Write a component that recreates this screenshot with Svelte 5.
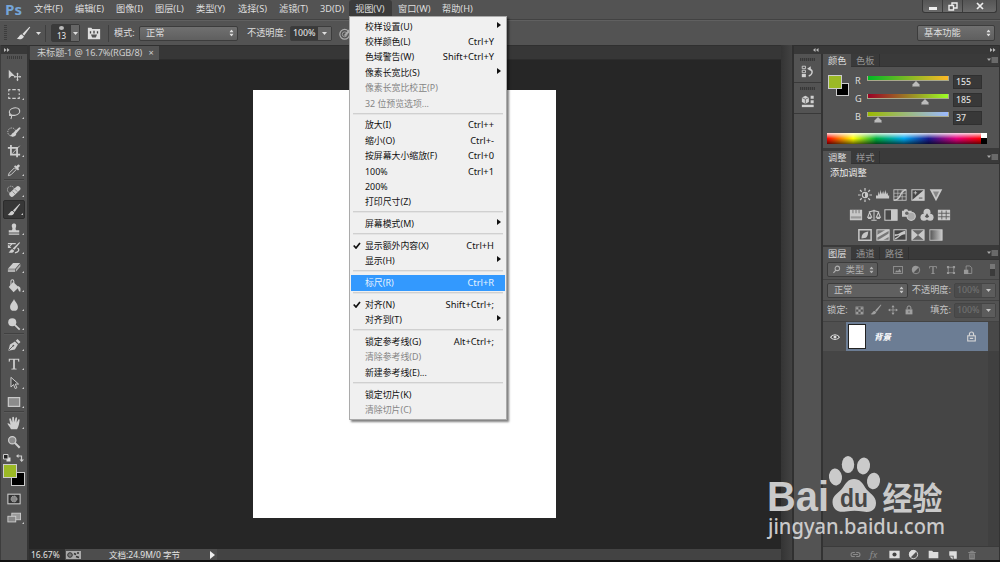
<script>
  const menus = [
    { name: '文件(F)', w: 41 }, { name: '编辑(E)', w: 41 }, { name: '图像(I)', w: 39 }, { name: '图层(L)', w: 41 },
    { name: '类型(Y)', w: 42 }, { name: '选择(S)', w: 41 }, { name: '滤镜(T)', w: 41 }, { name: '3D(D)', w: 35 },
    { name: '视图(V)', w: 43, open: true }, { name: '窗口(W)', w: 44 }, { name: '帮助(H)', w: 41 }
  ];

  const viewMenu = [
    [
      { name: '校样设置(U)', sub: true },
      { name: '校样颜色(L)', key: 'Ctrl+Y' },
      { name: '色域警告(W)', key: 'Shift+Ctrl+Y' },
      { name: '像素长宽比(S)', sub: true },
      { name: '像素长宽比校正(P)', off: true },
      { name: '32 位预览选项...', off: true }
    ],
    [
      { name: '放大(I)', key: 'Ctrl++' },
      { name: '缩小(O)', key: 'Ctrl+-' },
      { name: '按屏幕大小缩放(F)', key: 'Ctrl+0' },
      { name: '100%', key: 'Ctrl+1' },
      { name: '200%' },
      { name: '打印尺寸(Z)' }
    ],
    [{ name: '屏幕模式(M)', sub: true }],
    [
      { name: '显示额外内容(X)', key: 'Ctrl+H', check: true },
      { name: '显示(H)', sub: true }
    ],
    [{ name: '标尺(R)', key: 'Ctrl+R', active: true }],
    [
      { name: '对齐(N)', key: 'Shift+Ctrl+;', check: true },
      { name: '对齐到(T)', sub: true }
    ],
    [
      { name: '锁定参考线(G)', key: 'Alt+Ctrl+;' },
      { name: '清除参考线(D)', off: true },
      { name: '新建参考线(E)...' }
    ],
    [
      { name: '锁定切片(K)' },
      { name: '清除切片(C)', off: true }
    ]
  ];

  // all icons are drawn on a 16x16 grid
  const icons = {
    move: '<path d="M2 2v10l3-3h4z" fill="currentColor"/><path d="M12 6v8M8 10h8" stroke="currentColor" stroke-width="1.2"/><path d="M12 5l-1.5 2h3zM12 15l-1.5-2h3zM7.5 10l2-1.5v3zM16 10l-1.6-1.5v3z" fill="currentColor"/>',
    marquee: '<path d="M2 5V3h2M6 3h4M12 3h2v2M14 7v2M14 11v2h-2M10 13H6M4 13H2v-2M2 9V7" fill="none" stroke="currentColor" stroke-width="1.3"/>',
    lasso: '<ellipse cx="8.6" cy="6.4" rx="6" ry="4.2" transform="rotate(-12 8.6 6.4)" fill="none" stroke="currentColor" stroke-width="1.3"/><path d="M3.6 9.2c-1.4 1-.8 2 .6 1.6s1.2 2.2.2 4" fill="none" stroke="currentColor" stroke-width="1.2"/>',
    quick: '<circle cx="5.5" cy="8" r="4.6" fill="none" stroke="currentColor" stroke-dasharray="1.5 1.3"/><path d="M15.8 3.5L9.8 10.500 7.300 8.500 14 2.500z" fill="currentColor"/><path d="M8.6 8.8c-3-.6-3 2.400-5.1 3.600 2.5 1.700 6.500 1 7.100-1.800z" fill="currentColor"/>',
    crop: '<path d="M4.5 1v11H15M1 4.5h10.5V15" fill="none" stroke="currentColor" stroke-width="2"/><path d="M6 11L14.5 2" stroke="currentColor"/>',
    dropper: '<path d="M1.5 14.5l1-3 6-6 2 2-6 6z" fill="none" stroke="currentColor" stroke-width="1.1"/><path d="M8 4l4.5 4.5L14 7l-1.3-1.4 1.7-1.7c1-1-.9-2.9-2-1.9l-1.8 1.7L9.4 2.6z" fill="currentColor"/>',
    heal: '<circle cx="4.5" cy="6.5" r="4" fill="none" stroke="currentColor" stroke-dasharray="1.3 1.2"/><rect x="1.5" y="5.7" width="15" height="5.6" rx="2.6" transform="rotate(-43 9 8.5)" fill="currentColor"/><path d="M6.3 8.5L9 11.2M9 6l2.7 2.7" stroke="#777" stroke-width=".9"/>',
    brush: '<path d="M15.2 1.2L8.8 10.2 6.8 8.6 14.4.8z" fill="currentColor"/><path d="M6.4 9.2c-3-.2-2.6 2.8-5.6 4.2 2.8 1.4 6.9.8 7.6-2.6z" fill="currentColor"/>',
    stamp: '<path d="M6 6.6C3.2.2 12.8.2 10 6.6c-.5 1.2 0 2.4.5 2.9H14v2.5H2V9.500h3.500c.5-.5 1-1.700.5-2.900zM2 13.200h12v1.500H2z" fill="currentColor"/>',
    history: '<path d="M15 2L8.500 10l-2-1.400L14 1.500zM6.300 9.500c-2.500 0-2.500 2.500-4.500 3.500 2.500 1 5.700.5 6.400-2z" fill="currentColor"/><path d="M1 3h9M2 7l4-4M12 8c3 2 1 5-3 5.500" fill="none" stroke="currentColor" stroke-width="1.300"/><path d="M1 4v4h4z" fill="currentColor"/>',
    eraser: '<path d="M1 10l6-6.500h8L9.500 10z" fill="currentColor"/><path d="M1 10.700h8.300v3H1zM10.200 10.500L15.300 4.500v3l-5.100 6z" fill="currentColor" opacity=".75"/>',
    bucket: '<path d="M7 3.500l6.500 6L7.500 15 2 9z" fill="currentColor"/><path d="M4.500 8V2.800c0-2.500 3.300-2.500 3.300 0V8" fill="none" stroke="currentColor" stroke-width="1.200"/><path d="M12.500 8c3.400 1 3.300 4 2.700 6.500-2 .1-2-3-3.400-4.500z" fill="currentColor"/>',
    drop: '<path d="M8 1c1 3 4.500 5.500 4.500 9.200a4.500 4.500 0 0 1-9 0C3.500 6.500 7 4 8 1z" fill="currentColor"/>',
    dodge: '<circle cx="6" cy="6" r="4.600" fill="currentColor"/><path d="M9 9l5.500 5.500" stroke="currentColor" stroke-width="2"/>',
    pen: '<path d="M1.500 14.500L3.400 7.500 9 4l3.500 3.500L9 13z" fill="currentColor"/><path d="M10 3l2-1.800 3.400 3.400-2 2z" fill="currentColor"/><path d="M2 14l5-5" stroke="#535353"/><circle cx="7.300" cy="8.700" r="1" fill="#535353"/>',
    type: '<path d="M2 2h12v3.500h-1L12.500 3H9v10l2 .4v.8H5v-.8l2-.4V3H3.500L3 5.500H2z" fill="currentColor"/>',
    path: '<path d="M4.500 1.500v11l3-2.700 1.800 4.500 2-.8-1.900-4.300h3.800z" fill="#444" stroke="currentColor" stroke-width="1.100"/>',
    rect: '<rect x="1.500" y="3" width="13" height="10" fill="#8c8c8c" stroke="currentColor" stroke-width="1.300"/>',
    hand: '<path d="M4.500 15C3.500 12 1 10.300.5 8.500c1-1 2.500.5 3.500 1.500L2.500 3.500c.6-1.200 1.700-1 2.100.2L6 7.500 6 1.700c.4-1.100 1.700-1.100 2 0l.4 5.500L9.700 2c.5-1 1.700-.8 1.800.3L11 7.800l1.800-3.600c.7-.9 1.800-.4 1.600.7C14 8 13.500 12 11.500 15z" fill="currentColor"/>',
    zoom: '<circle cx="6" cy="6" r="4.200" fill="#8b8b8b" stroke="currentColor" stroke-width="1.300"/><path d="M9 9l5.500 5.500" stroke="currentColor" stroke-width="2.400"/>',
    mask: '<rect x="1" y="2.500" width="14" height="11" fill="#333" stroke="currentColor" stroke-width="1.200"/><circle cx="8" cy="8" r="3.400" fill="#888" stroke="#bbb" stroke-dasharray="1.200 1"/>',
    screens: '<rect x="5.500" y="2.500" width="10" height="7.500" fill="#999" stroke="currentColor"/><rect x="1" y="6" width="9" height="6.500" fill="#888" stroke="currentColor"/>',
    preset: '<path d="M1 2h4l1 1.500h9V15H1z" fill="currentColor"/><path d="M4 6v2.500M8 5.500v3M12 6v2.500" stroke="#444" stroke-width="1.500"/><path d="M4.500 9.800h7L10 13H6z" fill="#555"/>',
    pressure: '<circle cx="7" cy="9" r="6" fill="none" stroke="currentColor" stroke-width="1.500"/><circle cx="7" cy="9" r="3" fill="none" stroke="currentColor"/><path d="M6 10l8-9 2 2-8 8z" fill="currentColor"/>',
    historyPanel: '<path d="M1.500 1.500h4v3h-4zM1.500 6.500h4v3h-4z" fill="none" stroke="currentColor" stroke-width="1.100"/><path d="M1 11h5v4H1z" fill="currentColor"/><path d="M9.500 13.500c5-1.500 5.500-7 1.500-8.500" fill="none" stroke="currentColor" stroke-width="1.700"/><path d="M7.500 4.500L12 1.500v6z" fill="currentColor"/>',
    cubePanel: '<path d="M1 4l4-2 4 2v5l-4 2-4-2z" fill="currentColor"/><path d="M1 4l4 2 4-2M5 6v5" stroke="#666" fill="none"/><path d="M11 2h3.500v3.500H11zM11 7h3.500v3.500H11z" fill="currentColor"/><rect x="1" y="12.300" width="13.500" height="2.700" fill="currentColor"/>',
    sun: '<circle cx="8" cy="8" r="3" fill="none" stroke="currentColor" stroke-width="1.300"/><path d="M8 5a3 3 0 0 1 0 6z" fill="currentColor"/><path d="M8 0v3M8 13v3M0 8h3M13 8h3M2.300 2.300l2 2M11.700 11.700l2 2M2.300 13.700l2-2M11.700 4.300l2-2" stroke="currentColor" stroke-width="1.400"/>',
    levels: '<path d="M0 9l1-1 1 1 1-5 1 4 1-6 1 5 1-3 1 3 1-4 1 4 1-5 1 5 1-2 1 4 1-1v4H0z" fill="currentColor"/>',
    curves: '<rect x="1" y="2" width="14" height="12" fill="none" stroke="currentColor"/><path d="M5.500 2v12M10.500 2v12M1 6h14M1 10h14" stroke="currentColor" stroke-width=".7"/><path d="M1 14c9 0 6-11 14-12" fill="none" stroke="currentColor" stroke-width="1.700"/>',
    exposure: '<rect x="1" y="2" width="14" height="12" fill="#444" stroke="currentColor" stroke-width="1.200"/><path d="M15 2v12H1z" fill="currentColor"/><path d="M3 5.500h4M5 3.500v4" stroke="currentColor"/><path d="M9 11.500h4" stroke="#444"/>',
    vibrance: '<path d="M.8 1.500h14.400L8 15z" fill="currentColor"/><path d="M4.500 4h7L8 11z" fill="#888"/>',
    hue: '<path d="M1 2h14v12H1z" fill="currentColor"/><path d="M4.500 2v4M8 2v4M11.500 2v4" stroke="#777" stroke-width="1.100"/><path d="M2 9.500h12v2.500H2z" fill="#999"/>',
    balance: '<path d="M8 2v11M5 14h6M2 4.500l6-1.500 6 1.500M3 5L.8 10.500h4.500zM13 5l-2.300 5.500h4.500z" fill="none" stroke="currentColor" stroke-width="1.200"/><path d="M.5 10.500h5l-1 2h-3zM10.500 10.500h5l-1 2h-3z" fill="currentColor"/>',
    bw: '<rect x="1" y="2" width="14" height="12" fill="#484848" stroke="currentColor" stroke-width="1.200"/><path d="M8 2h7v12H8z" fill="currentColor"/>',
    photo: '<path d="M0 3h2l1-1.500h3L7 3h4v7H0z" fill="currentColor"/><circle cx="10.500" cy="9.500" r="4.700" fill="#aaa" stroke="currentColor" stroke-width="1.300"/><circle cx="5.500" cy="6" r="2" fill="#666"/>',
    mixer: '<circle cx="8" cy="4.800" r="4" fill="currentColor"/><circle cx="4.500" cy="10.500" r="4" fill="currentColor"/><circle cx="11.500" cy="10.500" r="4" fill="currentColor"/><path d="M8 6l2.500 4L8 11.500 5.500 10z" fill="#555"/>',
    lookup: '<path d="M1 2h14v12H1z" fill="currentColor"/><path d="M5.500 3v10M10.500 3v10M1.500 6h13M1.500 10h13" stroke="#5a5a5a"/>',
    invert: '<rect x="1" y="2" width="14" height="12" fill="#555" stroke="currentColor" stroke-width="1.700"/><path d="M4 12c0-5 3-7.500 8-8-1 1.500 0 5-3 7z" fill="currentColor"/>',
    poster: '<rect x="1" y="2" width="14" height="12" fill="#777" stroke="currentColor" stroke-width="1.200"/><path d="M1 8l10-6h4v1L1 11z" fill="currentColor"/><path d="M2 14l13-8v4l-7 4z" fill="currentColor"/>',
    threshold: '<rect x="1" y="2" width="14" height="12" fill="#444" stroke="currentColor" stroke-width="1.200"/><path d="M2 7c4 1 5-2 12-4v4c-6 0-7 5-12 6 0-3 4-2 5-5L2 9.500z" fill="currentColor"/>',
    selective: '<rect x="1" y="2" width="14" height="12" fill="#666" stroke="currentColor"/><path d="M1 2l7 6-7 6zM15 2L8 8l7 6z" fill="currentColor"/>',
    gradmap: '<defs><linearGradient id="gm"><stop offset="0" stop-color="#555"/><stop offset="1" stop-color="#ccc"/></linearGradient></defs><rect x="1" y="2" width="14" height="12" fill="url(#gm)" stroke="currentColor"/>',
    search: '<circle cx="9.500" cy="6" r="4" fill="none" stroke="currentColor" stroke-width="1.800"/><path d="M7 9l-4.500 5" stroke="currentColor" stroke-width="2"/>',
    image: '<rect x="1" y="2.500" width="14" height="11" fill="none" stroke="currentColor" stroke-width="1.300"/><path d="M3 11.500l3-3 2 1.500 2.500-4 3 5.500z" fill="currentColor"/>',
    half: '<circle cx="8" cy="8" r="6" fill="none" stroke="currentColor" stroke-width="1.300"/><path d="M12.200 3.800A6 6 0 1 0 3.800 12.200z" fill="currentColor"/>',
    shape: '<rect x="3.500" y="3.500" width="9" height="9" fill="none" stroke="currentColor" stroke-width="1.200"/><path d="M1.500 1.500h3.500v3.500H1.500zM11 1.500h3.500v3.500H11zM1.500 11h3.500v3.500H1.500zM11 11h3.500v3.500H11z" fill="currentColor"/>',
    smart: '<path d="M5 1.500h6l3 3v9H5z" fill="none" stroke="currentColor" stroke-width="1.300"/><path d="M1.500 7.500h7v7h-7z" fill="currentColor"/>',
    checker: '<rect x="1.500" y="1.500" width="13" height="13" fill="none" stroke="currentColor"/><path d="M2 2h4v4H2zM10 2h4v4h-4zM6 6h4v4H6zM2 10h4v4H2zM10 10h4v4h-4z" fill="currentColor"/>',
    cross: '<path d="M8 2v12M2 8h12" stroke="currentColor" stroke-width="1.200"/><path d="M8 0L5.500 3.500h5zM8 16l-2.500-3.500h5zM0 8l3.500-2.500v5zM16 8l-3.500-2.500v5z" fill="currentColor"/>',
    lock: '<rect x="2.500" y="7" width="11" height="8" fill="currentColor"/><path d="M5 7V4.500a3 3 0 0 1 6 0V7" fill="none" stroke="currentColor" stroke-width="1.600"/><path d="M8 9.500v3" stroke="#555" stroke-width="1.300"/>',
    lockOutline: '<rect x="2.500" y="7" width="11" height="7.500" fill="none" stroke="currentColor" stroke-width="1.600"/><path d="M5 7V4.500a3 3 0 0 1 6 0V7M5.500 10.800h5" fill="none" stroke="currentColor" stroke-width="1.700"/>',
    eye: '<path d="M1 8.500c3-5.500 11-5.500 14 0-3 4.500-11 4.500-14 0z" fill="#3c3c3c" stroke="currentColor" stroke-width="1.700"/><circle cx="8" cy="8" r="2.500" fill="currentColor"/>',
    link: '<path d="M7 5H4.500a3 3 0 0 0 0 6H7M9 5h2.500a3 3 0 0 1 0 6H9M4.500 8h7" fill="none" stroke="currentColor" stroke-width="1.500"/>',
    addMask: '<path d="M.5 2.500h15v11H.5z" fill="currentColor"/><circle cx="8" cy="8" r="3" fill="#444"/>',
    folder: '<path d="M1 2.500h5l1.500 2H15v9H1z" fill="currentColor"/>',
    page: '<path d="M2 2h12v12H9V9H2z" fill="currentColor"/><path d="M2.500 10.500h5V15z" fill="currentColor"/>',
    trash: '<path d="M2 4h12M6 3.500V2h4v1.500" stroke="currentColor" stroke-width="1.500" fill="none"/><path d="M3.500 5.500h9V15h-9z" fill="currentColor"/><path d="M6 7v6M8 7v6M10 7v6" stroke="#555" stroke-width=".9"/>'
  };

  const tools = [
    ['move', 'marquee', 'lasso', 'quick', 'crop', 'dropper'],
    ['heal', 'brush', 'stamp', 'history', 'eraser', 'bucket', 'drop', 'dodge'],
    ['pen', 'type', 'path', 'rect'],
    ['hand', 'zoom']
  ];

  const channels = [
    { name: 'R', value: 155, from: '#00b925', to: '#ffb925' },
    { name: 'G', value: 185, from: '#9b0025', to: '#9bff25' },
    { name: 'B', value: 37, from: '#9bb900', to: '#9bb9ff' }
  ];

  const adjustments = [
    ['sun', 'levels', 'curves', 'exposure', 'vibrance'],
    ['hue', 'balance', 'bw', 'photo', 'mixer', 'lookup'],
    ['invert', 'poster', 'threshold', 'selective', 'gradmap']
  ];
</script>

{#snippet icon(name, size = 12)}
  <svg class="icon" width={size} height={size} viewBox="0 0 16 16">{@html icons[name]}</svg>
{/snippet}

{#snippet updown()}
  <svg class="updown" width="5" height="8" viewBox="0 0 5 8"><path d="M0 3l2.500-3L5 3zM0 5l2.500 3L5 5z" fill="currentColor" /></svg>
{/snippet}

{#snippet caret()}
  <svg class="caret" width="5" height="3" viewBox="0 0 5 3"><path d="M0 0h5L2.500 3z" fill="currentColor" /></svg>
{/snippet}

{#snippet tabs(names)}
  <div class="tabs">
    {#each names as name, i}
      <span class="tab" class:on={i === 0}>{name}</span>
    {/each}
    <svg class="flyout" width="11" height="7" viewBox="0 0 11 7"><path d="M0 1.500h4L2 4z" fill="#aaa" /><path d="M4.500 1H11M4.500 3H11M4.500 5H11" stroke="#999" /></svg>
  </div>
{/snippet}

<div class="app">
  <div class="menubar">
    <span class="logo">Ps</span>
    <nav>
      {#each menus as m}
        <span class="menu" class:open={m.open} style="width: {m.w}px">{m.name}</span>
      {/each}
    </nav>
    <div class="window-buttons">
      <span class="min"><i></i></span>
      <span><svg width="10" height="9" viewBox="0 0 10 9"><path d="M4 1h5v5H4z" fill="none" stroke="#eee" stroke-width="1.400" /><path d="M1 3.500h4.500V8H1z" fill="#5a5a5a" stroke="#eee" stroke-width="1.400" /></svg></span>
      <span class="close"><svg width="8" height="8" viewBox="0 0 8 8"><path d="M1 1l6 6M7 1L1 7" stroke="#eee" stroke-width="1.700" /></svg></span>
    </div>
  </div>

  <div class="options">
    <i class="grip"></i>
    <span class="brush">{@render icon('brush', 15)}</span>
    {@render caret()}
    <i class="rule"></i>
    <div class="size"><div class="tip"><i></i><b>13</b></div><div class="drop">{@render caret()}</div></div>
    <span class="preset">{@render icon('preset', 14)}</span>
    <i class="rule"></i>
    <span class="mode-label">模式:</span>
    <div class="select mode"><span>正常</span>{@render updown()}</div>
    <span class="op-label">不透明度:</span>
    <div class="field"><b>100%</b><div class="drop">{@render caret()}</div></div>
    <span class="pressure">{@render icon('pressure', 13)}</span>
    <div class="select workspace"><span>基本功能</span>{@render updown()}</div>
  </div>

  <div class="body">
    <aside class="toolbox">
      <div class="strip"><svg width="6" height="4" viewBox="0 0 6 4"><path d="M0 0l2.500 2L0 4zM3 0l2.500 2L3 4z" fill="#bbb" /></svg></div>
      <div class="handle"></div>
      {#each tools as group, g}
        {#if g}<hr />{/if}
        {#each group as t}
          <div class="tool" class:on={t === 'brush'}>
            {@render icon(t, 14)}
            {#if t !== 'move' && t !== 'zoom'}<i></i>{/if}
          </div>
        {/each}
      {/each}
      <div class="mini">
        <svg width="8" height="8" viewBox="0 0 8 8"><path d="M3.500 3.500h4v4h-4z" fill="#ddd" /><path d="M.5.5h4.500v4.500H.5z" fill="#222" stroke="#ccc" /></svg>
        <svg width="8" height="8" viewBox="0 0 8 8"><path d="M2 2h3.500v4" fill="none" stroke="#ccc" stroke-width="1.200" /><path d="M0 2l2.500-2v4zM3.500 5.500h4.500L5.700 8z" fill="#ccc" /></svg>
      </div>
      <div class="swatches"><i class="bg"></i><i class="fg"></i></div>
      <div class="tool">{@render icon('mask', 14)}</div>
      <div class="tool">{@render icon('screens', 14)}<i></i></div>
    </aside>

    <main>
      <div class="doc-tabs"><span class="doc-tab">未标题-1 @ 16.7%(RGB/8) <em>×</em></span></div>
      <div class="stage"><div class="paper"></div></div>
      <div class="status">
        <span class="zoom">16.67%</span>
        <div class="info">
          <svg width="15" height="8" viewBox="0 0 15 8"><path d="M0 0h15v8H0z" fill="#aaa" /><circle cx="4" cy="4" r="2.300" fill="#777" stroke="#333" /><path d="M8 2.500l2 1M10 5.500l3 1M11 2h2" stroke="#333" stroke-width="1.600" fill="none" /></svg>
          <span>文档:24.9M/0 字节</span>
          <svg width="5" height="8" viewBox="0 0 5 8"><path d="M0 0l5 4-5 4z" fill="#eee" /></svg>
        </div>
      </div>
    </main>
    <div class="vscroll"></div>

    <div class="right">
      <div class="strip both">
        <svg width="6" height="4" viewBox="0 0 6 4"><path d="M2.500 0L0 2l2.500 2zM5.500 0L3 2l2.500 2z" fill="#bbb" /></svg>
        <svg width="6" height="4" viewBox="0 0 6 4"><path d="M0 0l2.500 2L0 4zM3 0l2.500 2L3 4z" fill="#bbb" /></svg>
      </div>
      <div class="columns">
        <div class="dock">
          <div class="dock-cell"><i></i>{@render icon('historyPanel', 13)}</div>
          <div class="dock-cell"><i></i>{@render icon('cubePanel', 14)}</div>
        </div>
        <div class="panels">
          <section class="color">
            {@render tabs(['颜色', '色板'])}
            <div class="mixer">
              <div class="pair"><i class="bg"></i><i class="fg"></i></div>
              <div class="channels">
                {#each channels as c}
                  <div class="channel">
                    <span>{c.name}</span>
                    <div class="track">
                      <div class="ramp" style="background: linear-gradient(to right, {c.from}, {c.to})"></div>
                      <svg class="thumb" style="left: {c.value / 255 * 100}%" width="8" height="6" viewBox="0 0 8 6"><path d="M4 0l3.500 3.500v2h-7v-2z" fill="#bbb" stroke="#888" stroke-width=".6" /></svg>
                    </div>
                    <b>{c.value}</b>
                  </div>
                {/each}
              </div>
            </div>
            <div class="spectrum"><div></div><i></i></div>
          </section>

          <section class="adjust">
            {@render tabs(['调整', '样式'])}
            <p>添加调整</p>
            {#each adjustments as row}
              <div class="adjust-row">
                {#each row as a}<span>{@render icon(a, 14)}</span>{/each}
              </div>
            {/each}
          </section>

          <section class="layers">
            {@render tabs(['图层', '通道', '路径'])}
            <div class="bar filter">
              <div class="select kind">{@render icon('search', 9)}<span>类型</span>{@render updown()}</div>
              <div class="filters">
                {#each ['image', 'half', 'type', 'shape', 'smart'] as f}{@render icon(f, 10)}{/each}
              </div>
              <i class="switch"></i>
            </div>
            <div class="bar">
              <div class="select blend"><span>正常</span>{@render updown()}</div>
              <span class="lab">不透明度:</span>
              <div class="field dim"><b>100%</b><div class="drop">{@render caret()}</div></div>
            </div>
            <div class="bar locks">
              <span class="lock-label">锁定:</span>
              <div class="lock-icons">
                {@render icon('checker', 9)}{@render icon('brush', 12)}{@render icon('cross', 10)}{@render icon('lock', 10)}
              </div>
              <span class="lab">填充:</span>
              <div class="field dim"><b>100%</b><div class="drop">{@render caret()}</div></div>
            </div>
            <div class="layer">
              <div class="eye">{@render icon('eye', 10)}</div>
              <div class="layer-row"><i class="thumbnail"></i><span>背景</span>{@render icon('lockOutline', 11)}</div>
            </div>
            <div class="empty"></div>
            <div class="footer">
              <span class="dim">{@render icon('link', 11)}</span>
              <em>fx</em>
              {@render icon('addMask', 11)}
              {@render icon('half', 11)}
              {@render icon('folder', 11)}
              {@render icon('page', 10)}
              <span class="dim">{@render icon('trash', 10)}</span>
            </div>
          </section>
        </div>
      </div>
    </div>
  </div>
  <div class="taskbar"></div>

  <div class="dropdown">
    {#each viewMenu as group, g}
      {#if g}<hr />{/if}
      {#each group as item}
        <div class="item" class:off={item.off} class:active={item.active}>
          <span class="check">{#if item.check}<svg width="8" height="7" viewBox="0 0 8 7"><path d="M.7 3.500L3 6l4-5" fill="none" stroke="#111" stroke-width="1.700" /></svg>{/if}</span>
          <span class="name">{item.name}</span>
          {#if item.key}<span class="key">{item.key}</span>{/if}
          {#if item.sub}<svg class="sub" width="4" height="6" viewBox="0 0 4 6"><path d="M0 0l4 3-4 3z" fill="#111" /></svg>{/if}
        </div>
      {/each}
    {/each}
  </div>

  <svg class="watermark" width="190" height="100" viewBox="0 0 190 100">
    <g fill="#d2d2d2">
      <text x="3" y="57" class="bai" textLength="62" lengthAdjust="spacingAndGlyphs">Bai</text>
      <ellipse cx="71.500" cy="23" rx="6.500" ry="8.500" transform="rotate(-8 71.500 23)" />
      <ellipse cx="84" cy="10.500" rx="6.200" ry="8.600" />
      <ellipse cx="99.500" cy="12" rx="6.500" ry="8.500" transform="rotate(10 99.500 12)" />
      <ellipse cx="109.500" cy="27" rx="6.500" ry="8.300" transform="rotate(8 109.500 27)" />
      <path d="M90 25c6 0 8.500 4 11.500 9 3 4.500 10.500 8 10.500 15 0 8-7 10-13 8.500-6-1-11-1-17 0C75 59 68.500 56 68.500 48c0-7 6.500-9 10-14s5.500-9 11.500-9z" />
      <text x="118.500" y="56" class="cn" textLength="60" lengthAdjust="spacingAndGlyphs">经验</text>
      <text x="4" y="80" class="url" textLength="177" lengthAdjust="spacingAndGlyphs">jingyan.baidu.com</text>
    </g>
    <text x="76" y="53" class="du" fill="#484848" textLength="28" lengthAdjust="spacingAndGlyphs">du</text>
  </svg>
</div>

<style>
  :global(body) { margin: 0; background: #000; overflow: hidden; }
  .app { position: relative; width: 1000px; height: 562px; display: flex; flex-direction: column; background: #535353; color: #dedede; font: 9.2px/12px "Noto Sans", "Noto Sans CJK SC", sans-serif; overflow: hidden; }
  .app * { box-sizing: border-box; }
  svg { display: block; flex: none; }
  i { display: block; }
  b { font-weight: 500; }
  hr { margin: 0; border: 0; }

  .menubar { display: flex; height: 20px; flex: none; background: #535353; border-bottom: 1px solid #424242; white-space: nowrap; }
  .logo { width: 28px; padding-left: 5px; font: bold 15px/18px "Open Sans", sans-serif; color: #75a5d8; }
  nav { display: flex; height: 17px; }
  .menu { padding-left: 6px; line-height: 18px; }
  .menu.open { background: #3b3b3b; border-radius: 3px 3px 0 0; }
  .window-buttons { display: flex; margin-left: auto; margin-right: 3px; height: 13px; border: 1px solid #383838; border-top: 0; border-radius: 0 0 3px 3px; background: linear-gradient(#555, #6a6a6a); }
  .window-buttons span { width: 20px; display: flex; align-items: center; justify-content: center; border-right: 1px solid #3c3c3c; }
  .window-buttons .close { width: 33px; border: 0; }
  .min i { width: 8px; height: 3px; background: #eee; margin-top: 5px; }

  .options { display: flex; align-items: center; height: 25px; flex: none; border-top: 1px solid #606060; white-space: nowrap; }
  .grip { width: 3px; height: 16px; margin-left: 4px; background: repeating-linear-gradient(#3d3d3d 0 1px, #535353 1px 2px); }
  .brush { margin: 0 5px 0 9px; }
  .rule { width: 1px; height: 17px; background: #3f3f3f; margin-left: 4px; }
  .size { display: flex; height: 18px; margin-left: 5px; border: 1px solid #3a3a3a; border-radius: 2px; }
  .tip { width: 19px; background: #3a3a3a; display: flex; flex-direction: column; align-items: center; }
  .tip i { width: 5px; height: 5px; border-radius: 50%; background: #bbb; margin-top: 1px; }
  .tip b { font-size: 8px; line-height: 11px; }
  .drop { width: 8px; display: flex; align-items: center; justify-content: center; background: #666; }
  .preset { margin: 0 3px 0 7px; }
  .mode-label { margin-left: 5px; width: 25px; }
  .select { display: flex; align-items: center; justify-content: space-between; padding: 0 3px 0 6px; border: 1px solid #3c3c3c; border-radius: 2px; background: linear-gradient(#707070, #5f5f5f); }
  .select .updown { transform: scale(.85); }
  .mode { width: 99px; height: 15px; }
  .op-label { margin-left: 9px; width: 43px; }
  .field { display: flex; height: 15px; border: 1px solid #3c3c3c; background: #3a3a3a; border-radius: 2px; line-height: 13px; }
  .field b { width: 27px; padding-left: 2px; font-size: 8.800px; }
  .field .drop { width: 13px; }
  .pressure { margin-left: 7px; color: #ababab; }
  .workspace { width: 78px; height: 16px; margin-left: auto; margin-right: 5px; }

  .body { display: flex; height: 515px; flex: none; }
  .strip { height: 9px; flex: none; background: #383838; padding: 2px 0 0 3px; border-top: 1px solid #2f2f2f; }
  .toolbox { width: 29px; background: #535353; border-right: 2px solid #353535; border-left: 1px solid #3d3d3d; color: #cfcfcf; }
  .handle { height: 3px; width: 15px; margin: 2px 0 6px 6px; background: repeating-linear-gradient(to right, #3a3a3a 0 1px, #535353 1px 2px); }
  .tool { position: relative; display: flex; align-items: center; justify-content: center; height: 19px; margin: 0 2px; padding-right: 1px; }
  .tool.on { background: #373737; border: 1px solid #2c2c2c; border-radius: 2px; }
  .tool i { position: absolute; right: 1px; bottom: 3px; border: 1px solid transparent; border-right-color: #ccc; border-bottom-color: #ccc; }
  .toolbox hr { height: 2px; margin: 0 3px; background: #414141; border-bottom: 1px solid #5a5a5a; }
  .mini { display: flex; gap: 5px; margin: 1px 0 0 2px; height: 11px; align-items: center; }
  .swatches { position: relative; height: 23px; margin: 1px 0 2px 2px; }
  .swatches i { position: absolute; width: 14px; height: 14px; border: 1px solid #ccc; }
  .fg { left: 0; top: 0; background: #9bb925; }
  .bg { left: 8px; top: 8px; background: #000; }

  main { width: 752px; display: flex; flex-direction: column; }
  .doc-tabs { height: 15px; flex: none; background: #373737; border-bottom: 1px solid #2d2d2d; display: flex; border-top: 1px solid #303030; }
  .doc-tab { width: 129px; height: 14px; padding-left: 7px; background: #535353; line-height: 14px; color: #cecece; margin-left: 1px; white-space: nowrap; letter-spacing: -.1px; }
  .doc-tab em { font-style: normal; margin-left: 4px; }
  .stage { flex: 1; background: #262626; padding: 30px 0 0 224px; }
  .paper { width: 303px; height: 428px; background: #fff; }
  .status { height: 11px; flex: none; display: flex; background: #434343; font-size: 8.500px; line-height: 12px; color: #e4e4e4; }
  .zoom { width: 36px; padding-left: 2px; background: #303030; }
  .info { display: flex; align-items: center; width: 152px; padding: 1px 2px 0 1px; background: #4d4d4d; }
  .info span { margin: 0 auto 0 28px; }
  .vscroll { width: 13px; background: linear-gradient(to right, #343434, #424242); border-right: 2px solid #303030; }

  .right { flex: 1; display: flex; flex-direction: column; border-right: 1px solid #333; }
  .both { display: flex; justify-content: space-between; padding: 2px 3px 0 19px; }
  .columns { display: flex; flex: 1; }
  .dock { width: 29px; display: flex; flex-direction: column; border-right: 2px solid #333; }
  .dock-cell { height: 29px; display: flex; flex-direction: column; align-items: center; gap: 4px; padding-top: 4px; border-bottom: 1px solid #393939; color: #d0d0d0; }
  .dock-cell:nth-child(2) { height: 31px; }
  .dock-cell i { width: 15px; height: 3px; background: repeating-linear-gradient(to right, #383838 0 1px, #4a4a4a 1px 2px); }
  .panels { flex: 1; display: flex; flex-direction: column; background: #3a3a3a; }
  section { display: flex; flex-direction: column; background: #535353; }
  .tabs { display: flex; align-items: center; height: 13px; flex: none; background: #3a3a3a; border-bottom: 1px solid #333; }
  .tab { width: 29px; height: 13px; padding-left: 5px; line-height: 13px; color: #969696; border-right: 1px solid #303030; white-space: nowrap; }
  .tab.on { background: #535353; color: #ddd; width: 28px; border: 0; }
  .flyout { margin-left: auto; margin-right: 1px; }

  .color { height: 94px; }
  .mixer { display: flex; height: 66px; }
  .pair { position: relative; width: 27px; margin: 8px 0 0 5px; }
  .pair i { position: absolute; width: 14px; height: 14px; border: 1px solid #ccc; }
  .pair .bg { left: 8px; top: 8px; width: 13px; height: 13px; }
  .channels { padding-top: 5px; }
  .channel { display: flex; height: 18px; }
  .channel span { width: 12px; line-height: 18px; }
  .track { position: relative; width: 82px; margin-top: 4px; }
  .ramp { height: 5px; border: 1px solid #a9a98c; border-width: 0 1px 1px; }
  .thumb { position: absolute; top: 5px; margin-left: -5px; }
  .channel b { width: 29px; height: 14px; margin: 3px 0 0 4px; padding-left: 2px; background: #383838; border: 1px solid #303030; line-height: 12px; font-size: 8.800px; }
  .spectrum { display: flex; width: 160px; height: 11px; margin-left: 4px; }
  .spectrum div { flex: 1; background: linear-gradient(rgba(255, 255, 255, .85), transparent 50%, rgba(0, 0, 0, .6)), linear-gradient(to right, #f00, #ff0 17%, #00b140 32%, #00a8f0 50%, #1a1a90 66%, #e6007e 84%, #f00); }
  .spectrum i { width: 6px; background: linear-gradient(#fff 50%, #000 50%); }

  .adjust { height: 94px; margin-top: 3px; }
  .adjust p { margin: 3px 0 6px 7px; line-height: 12px; height: 12px; color: #e8e8e8; }
  .adjust-row { display: flex; height: 20px; flex: none; align-items: center; padding-left: 33px; color: #c8c8c8; }
  .adjust-row:nth-of-type(3) { padding-left: 24px; }
  .adjust-row span { width: 17.700px; display: flex; justify-content: center; }

  .layers { flex: 1; margin-top: 2px; }
  .bar { display: flex; align-items: center; height: 21px; flex: none; border-bottom: 1px solid #434343; padding: 0 4px; color: #c4c4c4; white-space: nowrap; }
  .filter { height: 20px; }
  .locks { padding-bottom: 2px; }
  .kind { width: 51px; height: 15px; padding-left: 4px; background: #5d5d5d; color: #b0b0b0; }
  .filters { display: flex; gap: 7.500px; margin-left: 15px; color: #999; }
  .switch { width: 5px; height: 12px; margin-left: auto; background: linear-gradient(#777 45%, #3b3b3b 45%); }
  .blend { width: 81px; height: 15px; background: #606060; }
  .lab { margin-left: auto; margin-right: 3px; }
  .dim b { color: #707070; }
  .bar .field { border-color: #454545; background: #4b4b4b; margin-right: -1px; }
  .bar .field .drop { background: #5c5c5c; }
  .lock-icons { display: flex; align-items: center; gap: 6.200px; margin-left: 7px; color: #a0a0a0; }
  .layer { display: flex; height: 29px; background: #484848; }
  .eye { width: 23px; display: flex; align-items: center; justify-content: center; background: #505050; }
  .layer-row { width: 142px; display: flex; align-items: center; padding-left: 2px; background: #6c7d94; color: #fff; }
  .thumbnail { width: 18px; height: 25px; background: #fff; border: 1px solid #222; }
  .layer-row span { margin: 0 auto 0 8px; font-style: italic; font-size: 8.500px; font-weight: bold; }
  .layer-row .icon { margin-right: 11px; color: #d6d6d6; }
  .empty { flex: 1; background: #454545; border-right: 11px solid #404040; }
  .footer { display: flex; align-items: center; gap: 8.800px; height: 14px; padding: 2px 0 0 27px; background: #525252; border-top: 1px solid #3b3b3b; }
  .footer em { width: 10px; color: #8b8b8b; }
  .footer .dim { color: #8b8b8b; }
  .taskbar { height: 2px; background: #101010; }

  /* the opened 视图 menu floats over the document */
  .dropdown { position: absolute; left: 349px; top: 16px; width: 158px; height: 404px; padding: 2px 1px; background: #f0f0f0; border: 1px solid #aaa; box-shadow: 2px 2px 2px rgba(0, 0, 0, .5); color: #111; font-size: 8.900px; white-space: nowrap; }
  .dropdown hr { height: 2px; margin: 1.400px 2px 3px; background: #d0d0d0; border-bottom: 1px solid #e4e4e4; }
  .item { display: flex; align-items: center; height: 15.400px; padding-right: 11px; }
  .item .check { width: 14px; padding-left: 2px; }
  .item .key { margin-left: auto; font-size: 9.300px; }
  .item .sub { margin: -4px -7px 0 auto; }
  .item.off { color: #858585; }
  .item.active { background: #3399fe; color: #e8f3ff; }

  .watermark { position: absolute; left: 764px; top: 454px; opacity: .95; }
  .bai { font: bold 43px "Liberation Sans", sans-serif; }
  .du { font: bold 25px "Liberation Sans", sans-serif; }
  .cn { font: 700 32px "Noto Sans CJK SC", sans-serif; }
  .url { font: 500 22px "Noto Sans", sans-serif; }
</style>
